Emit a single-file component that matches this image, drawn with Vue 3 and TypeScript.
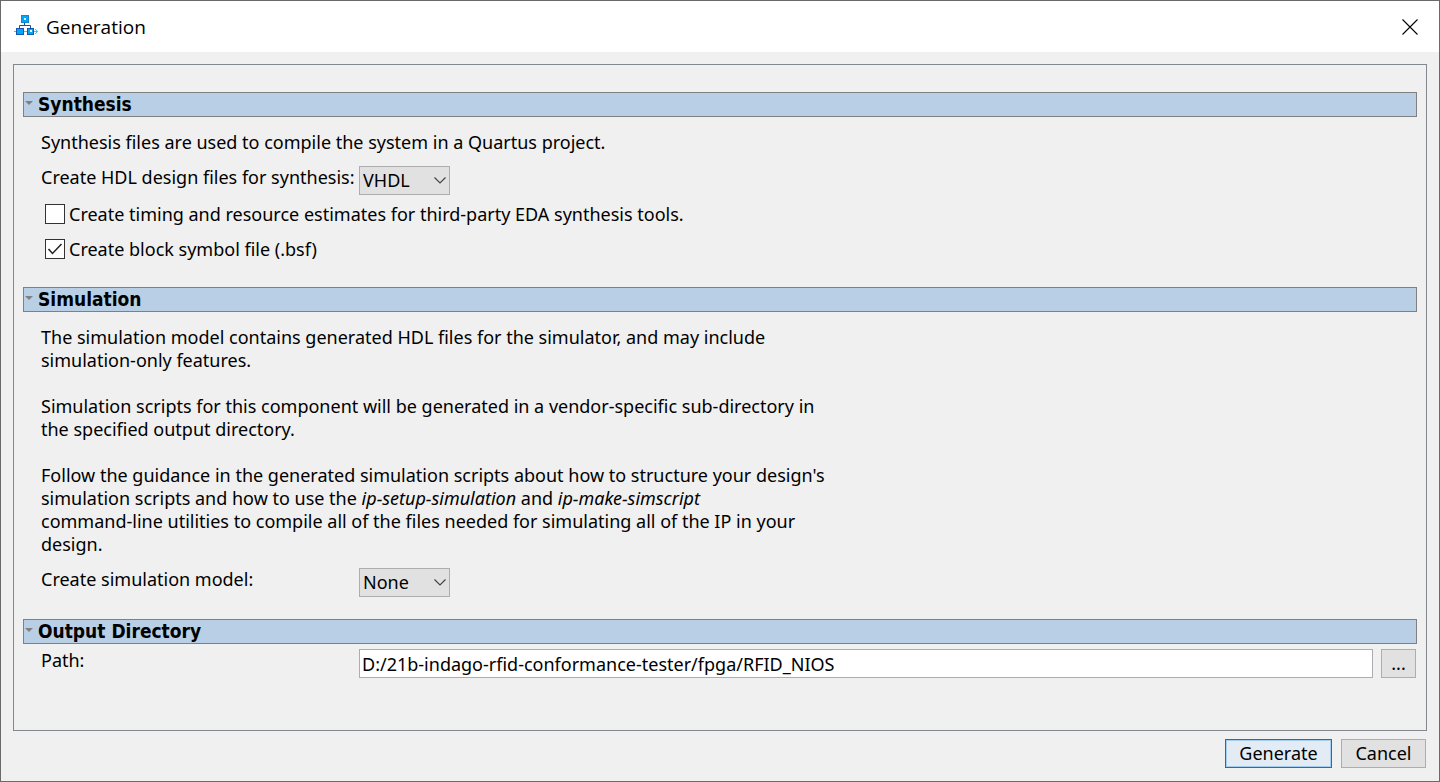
<script setup lang="ts">
import { reactive, ref } from 'vue'

type SectionKey = 'synthesis' | 'simulation' | 'output'

const open = reactive<Record<SectionKey, boolean>>({
  synthesis: true,
  simulation: true,
  output: true,
})
const hdl = ref<string>('VHDL')
const model = ref<string>('None')
const timing = ref<boolean>(false)
const blockSymbol = ref<boolean>(true)
const path = ref<string>('D:/21b-indago-rfid-conformance-tester/fpga/RFID_NIOS')

function toggle(key: SectionKey): void {
  open[key] = !open[key]
}
</script>

<template>
  <div class="window" role="dialog" aria-labelledby="window-title">
    <header class="titlebar">
      <svg class="app-icon" width="24" height="22" viewBox="0 0 24 22" aria-hidden="true">
        <path d="M0 16.5H24M21 14l2.5 2.5L21 19" fill="none" stroke="#5fb4e6" />
        <path d="M10.500 8v3M5.500 13v-2.500H16.500V13" fill="none" stroke="#1c4f9c" />
        <rect x="7.500" y="0.500" width="7" height="7" fill="#00a8f8" stroke="#1583d6" />
        <rect x="2.500" y="13.500" width="7" height="6" fill="#00a8f8" stroke="#1455b0" />
        <rect x="13.500" y="13.500" width="6" height="6" fill="#00a8f8" stroke="#1455b0" />
        <path d="M10 3h2v2h-2zM16 15h2v2h-2z" fill="#e4f6ff" />
      </svg>
      <h1 id="window-title">Generation</h1>
      <button class="close" type="button" aria-label="Close">
        <svg width="16" height="16" viewBox="0 0 16 16" aria-hidden="true">
          <path d="M0.500 0.500l15 15M15.500 0.500l-15 15" fill="none" stroke="#000" stroke-width="1.100" />
        </svg>
      </button>
    </header>

    <main class="panel">
      <section>
        <h2>
          <button type="button" :aria-expanded="open.synthesis" @click="toggle('synthesis')">
            <svg width="8" height="4" viewBox="0 0 8 4" aria-hidden="true"><path d="M0 0h8L4 4z" fill="#808080" /></svg>
            Synthesis
          </button>
        </h2>
        <div v-show="open.synthesis" class="content synthesis">
          <p>Synthesis files are used to compile the system in a Quartus project.</p>
          <div class="row">
            <label for="hdl">Create HDL design files for synthesis:</label>
            <span class="combo">
              <select id="hdl" v-model="hdl">
                <option>VHDL</option>
                <option>Verilog</option>
                <option>None</option>
              </select>
              <svg width="12" height="7" viewBox="0 0 12 7" aria-hidden="true"><path d="M0.500 0.500L6 6l5.500-5.500" fill="none" stroke="#444" stroke-width="1.200" /></svg>
            </span>
          </div>
          <div class="checks">
            <label class="check">
              <span class="box">
                <input v-model="timing" type="checkbox" />
                <svg v-if="timing" width="20" height="20" viewBox="0 0 20 20" aria-hidden="true"><path d="M3.500 10l4 4.500L16.500 5" fill="none" stroke="#222" stroke-width="1.500" /></svg>
              </span>
              Create timing and resource estimates for third-party EDA synthesis tools.
            </label>
            <label class="check">
              <span class="box">
                <input v-model="blockSymbol" type="checkbox" />
                <svg v-if="blockSymbol" width="20" height="20" viewBox="0 0 20 20" aria-hidden="true"><path d="M3.500 10l4 4.500L16.500 5" fill="none" stroke="#222" stroke-width="1.500" /></svg>
              </span>
              Create block symbol file (.bsf)
            </label>
          </div>
        </div>
      </section>

      <section>
        <h2>
          <button type="button" :aria-expanded="open.simulation" @click="toggle('simulation')">
            <svg width="8" height="4" viewBox="0 0 8 4" aria-hidden="true"><path d="M0 0h8L4 4z" fill="#808080" /></svg>
            Simulation
          </button>
        </h2>
        <div v-show="open.simulation" class="content simulation">
          <div class="prose">
            <p>
              The simulation model contains generated HDL files for the simulator, and may include<br />
              simulation-only features.
            </p>
            <p>
              Simulation scripts for this component will be generated in a vendor-specific sub-directory in<br />
              the specified output directory.
            </p>
            <p>
              Follow the guidance in the generated simulation scripts about how to structure your design's<br />
              simulation scripts and how to use the <em>ip-setup-simulation</em> and <em>ip-make-simscript</em><br />
              command-line utilities to compile all of the files needed for simulating all of the IP in your<br />
              design.
            </p>
          </div>
          <div class="row">
            <label for="model">Create simulation model:</label>
            <span class="combo">
              <select id="model" v-model="model">
                <option>None</option>
                <option>VHDL</option>
                <option>Verilog</option>
              </select>
              <svg width="12" height="7" viewBox="0 0 12 7" aria-hidden="true"><path d="M0.500 0.500L6 6l5.500-5.500" fill="none" stroke="#444" stroke-width="1.200" /></svg>
            </span>
          </div>
        </div>
      </section>

      <section>
        <h2>
          <button type="button" :aria-expanded="open.output" @click="toggle('output')">
            <svg width="8" height="4" viewBox="0 0 8 4" aria-hidden="true"><path d="M0 0h8L4 4z" fill="#808080" /></svg>
            Output Directory
          </button>
        </h2>
        <div v-show="open.output" class="content output">
          <div class="row">
            <label for="path">Path:</label>
            <input id="path" v-model="path" class="path" type="text" spellcheck="false" />
            <button class="btn browse" type="button" aria-label="Browse">...</button>
          </div>
        </div>
      </section>
    </main>

    <footer class="actions">
      <button class="btn generate" type="button">Generate</button>
      <button class="btn cancel" type="button">Cancel</button>
    </footer>
  </div>
</template>

<style>
body {
  margin: 0;
}
</style>

<style scoped>
.window,
.window * {
  box-sizing: border-box;
}

.window {
  display: flex;
  flex-direction: column;
  min-height: 100vh;
  border: 1px solid #6a6a6a;
  background: #f0f0f0;
  color: #000;
  font-family: 'Noto Sans', sans-serif;
  font-size: 18px;
  line-height: 23px;
}

button,
input,
select {
  margin: 0;
  border-radius: 0;
  color: inherit;
  font: inherit;
}

h1,
h2,
p {
  margin: 0;
}

svg {
  display: block;
  flex: none;
}

.titlebar {
  display: flex;
  align-items: center;
  height: 51px;
  padding: 0 21px 0 13px;
  background: #fff;
}

.app-icon {
  margin-bottom: 2px;
}

h1 {
  margin-left: 8px;
  font-family: 'Open Sans', sans-serif;
  font-size: 19px;
  font-weight: 400;
  line-height: 28px;
}

.close {
  margin-left: auto;
  padding: 0;
  border: 0;
  background: none;
}

.panel {
  flex: 1;
  margin: 12px 12px 8px;
  padding: 27px 9px 0;
  border: 1px solid #828790;
}

h2 {
  font-family: 'DejaVu Sans Condensed', 'Noto Sans', sans-serif;
  font-size: 19px;
  line-height: 23px;
}

h2 button {
  display: flex;
  align-items: center;
  gap: 5px;
  width: 100%;
  padding: 0 1px;
  border: 1px solid #808080;
  background: #b8cfe5;
  font-weight: 700;
  text-align: left;
}

h2 svg {
  margin-bottom: 4px;
}

.content {
  padding: 0 1px 0 18px;
  white-space: nowrap;
}

.synthesis {
  padding-top: 14px;
  padding-bottom: 26px;
}

.simulation {
  padding-top: 14px;
  padding-bottom: 22px;
}

.output {
  padding-top: 5px;
}

.row {
  display: flex;
  align-items: flex-start;
  margin-top: 12px;
}

.output .row {
  margin-top: 0;
}

.row label {
  width: 318px;
  flex: none;
}

.combo {
  display: grid;
  align-items: center;
  width: 91px;
}

.combo > * {
  grid-area: 1 / 1;
}

.combo svg {
  margin-right: 4px;
  justify-self: end;
  pointer-events: none;
}

select {
  width: 100%;
  height: 29px;
  padding: 0 3px;
  border: 1px solid #adadad;
  background: #e1e1e1;
  appearance: none;
}

.checks {
  display: flex;
  flex-direction: column;
  align-items: flex-start;
  gap: 12px;
  margin-top: 8px;
  padding-left: 4px;
}

.check {
  display: flex;
  align-items: flex-start;
  gap: 4px;
}

.box {
  display: grid;
  padding-top: 1px;
}

.box > * {
  grid-area: 1 / 1;
}

.box input {
  width: 20px;
  height: 20px;
  border: 1px solid #333;
  background: #fff;
  appearance: none;
}

.box svg {
  z-index: 1;
  pointer-events: none;
}

.prose {
  display: flex;
  flex-direction: column;
  gap: 23px;
}

.path {
  flex: 1;
  min-width: 0;
  height: 29px;
  padding: 0 2px;
  border: 1px solid #abadb3;
  background: #fff;
}

.btn {
  height: 29px;
  padding: 0;
  border: 1px solid #adadad;
  background: #e1e1e1;
}

.browse {
  width: 35px;
  margin-left: 8px;
}

.actions {
  display: flex;
  justify-content: flex-end;
  gap: 9px;
  padding: 0 13px 13px 0;
}

.generate {
  width: 107px;
  border-color: #0078d7;
  background: #e3ecf5;
  box-shadow: inset 0 0 0 1px #a5cdef;
}

.cancel {
  width: 85px;
}
</style>
